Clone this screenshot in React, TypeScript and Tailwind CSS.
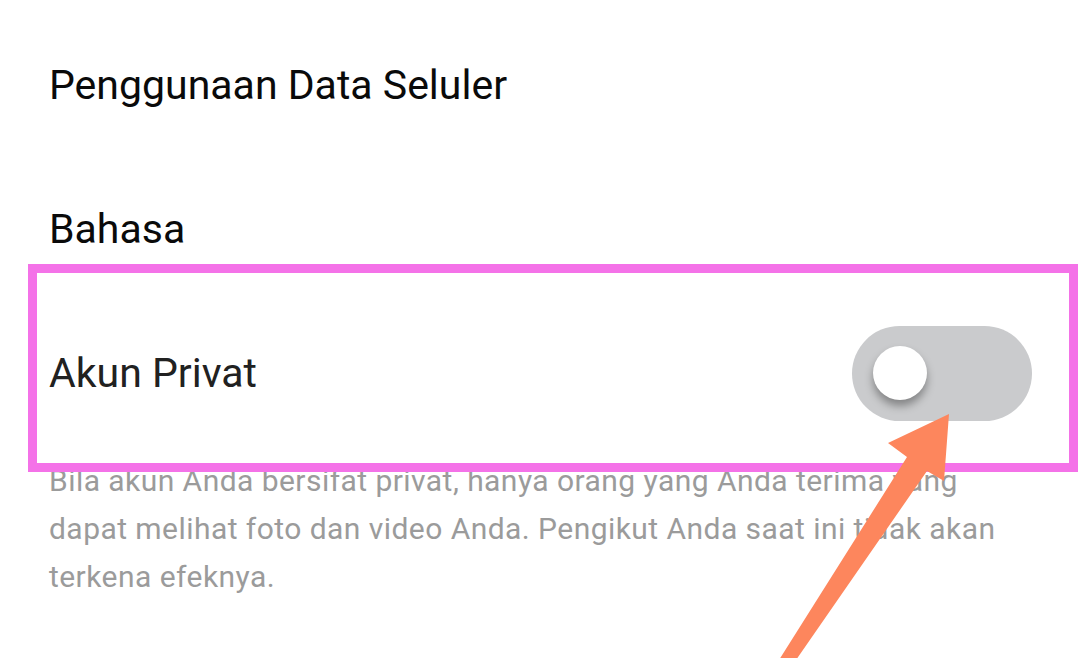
export default function App() {
  return (
    <div
      className="relative w-[1080px] h-[658px] overflow-hidden bg-white"
      style={{ fontFamily: "Roboto, 'Noto Sans', sans-serif" }}
    >
      <div className="pt-[13px] pl-[49px] pr-[48px]">
        {/* Mobile data */}
        <div className="h-[144px] flex items-center">
          <span className="text-[41px] leading-[48px] text-[#0a0a0a]">
            Penggunaan Data Seluler
          </span>
        </div>

        {/* Language */}
        <div className="h-[144px] flex items-center">
          <span className="text-[41px] leading-[48px] text-[#0a0a0a]">
            Bahasa
          </span>
        </div>

        {/* Private account */}
        <div className="h-[144px] flex items-center justify-between">
          <span className="text-[41px] leading-[48px] text-[#212121]">
            Akun Privat
          </span>

          <div className="w-[180px] h-[95px] rounded-full bg-[#cacbcd] flex items-center pl-[21px]">
            <div className="w-[54px] h-[54px] rounded-full bg-white shadow-[0_6px_9px_rgba(0,0,0,0.35)]" />
          </div>
        </div>

        <p className="mt-[12px] text-[30px] leading-[48px] tracking-[0.45px] text-[#9b9b9b] max-w-[965px]">
          Bila akun Anda bersifat privat, hanya orang yang Anda terima yang
          dapat melihat foto dan video Anda. Pengikut Anda saat ini tidak akan
          terkena efeknya.
        </p>
      </div>

      {/* Highlight box */}
      <div className="absolute left-[28px] top-[264px] w-[1050px] h-[208px] border-[9px] border-[#f472e8]" />

      {/* Arrow */}
      <svg
        className="absolute left-0 top-0"
        width="1080"
        height="658"
        viewBox="0 0 1080 658"
      >
        <polygon
          points="949,414 944,481 927,471 796,660 779,660 907,457 888,443"
          fill="#fd865d"
        />
      </svg>
    </div>
  );
}
